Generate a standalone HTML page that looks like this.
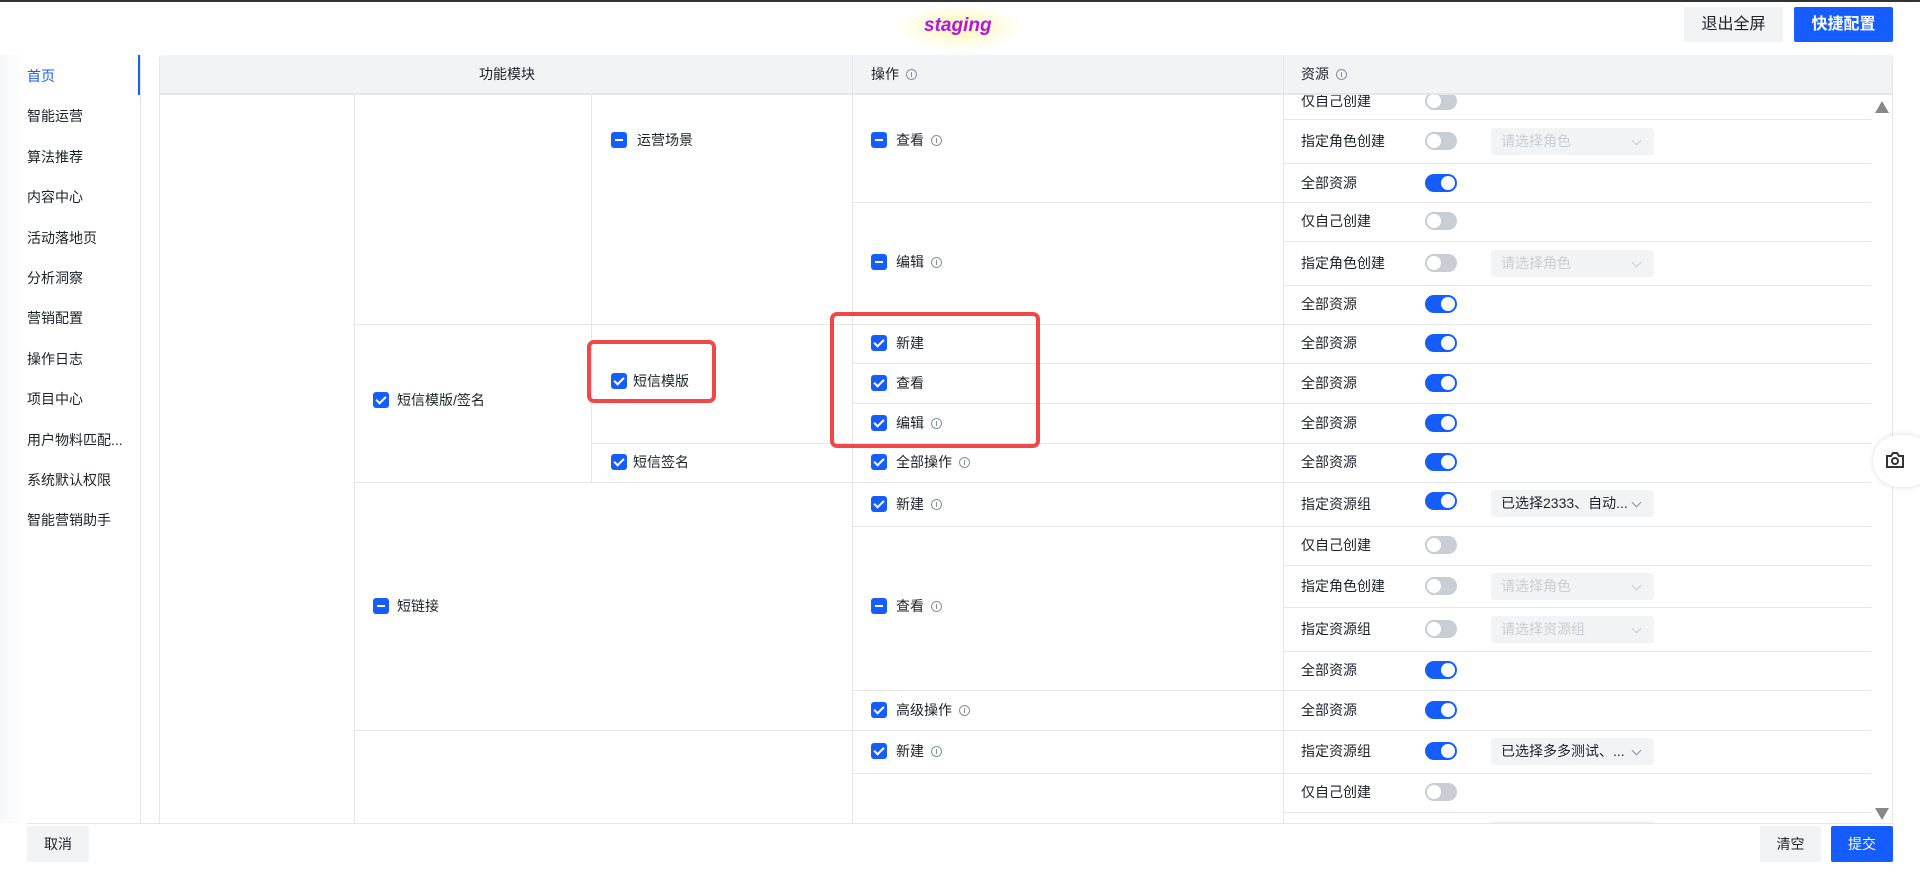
<!DOCTYPE html>
<html><head><meta charset="utf-8"><style>
*{margin:0;padding:0;box-sizing:border-box}
body{width:1920px;height:878px;overflow:hidden;background:#fff;position:relative;font-family:"Liberation Sans","Noto Sans CJK SC",sans-serif;color:#1d2129}
.a{position:absolute}
.t{position:absolute;font-size:14px;line-height:16px;white-space:nowrap;color:#1d2129}
.cb{position:absolute;width:16px;height:16px;border-radius:3px;background:#165dff}
.cb.c::after{content:"";position:absolute;left:5px;top:2px;width:4px;height:8px;border:solid #fff;border-width:0 2px 2px 0;transform:rotate(45deg)}
.cb.i::after{content:"";position:absolute;left:4px;top:7px;width:8px;height:2px;background:#fff}
.h{position:absolute;height:1px;background:#e5e6eb}
.v{position:absolute;width:1px;background:#e5e6eb}
.tg{position:absolute;width:32px;height:18px;border-radius:9px;background:#c9cdd4}
.tg::after{content:"";position:absolute;left:2px;top:2px;width:14px;height:14px;border-radius:50%;background:#fff}
.tg.on{background:#165dff}.tg.on::after{left:16px}
.sel{position:absolute;width:163px;height:27px;border-radius:3px;background:#f2f3f5;font-size:14px;line-height:27px;padding-left:10px;color:#c9cdd4;white-space:nowrap}
.sel.d{color:#1d2129}
.sel::after{content:"";position:absolute;right:14px;top:9px;width:6px;height:6px;border:solid #86909c;border-width:0 1px 1px 0;transform:rotate(45deg)}
.sel.p::after{border-color:#c9cdd4}
.in{display:inline-block;width:11px;height:11px;border:1px solid #86909c;border-radius:50%;position:relative;vertical-align:-1px;margin-left:7px}
.in::after{content:"";position:absolute;left:4px;top:2px;width:1px;height:5px;background:#86909c}
.sb{position:absolute;left:27px;font-size:14px;color:#1d2129}
.btn{position:absolute;border-radius:2px;text-align:center;font-size:16px}
</style></head><body>
<div class="a" style="left:0;top:0;width:1920px;height:2px;background:#333"></div>
<div class="a" style="left:895px;top:4px;width:130px;height:46px;border-radius:50%;background:radial-gradient(ellipse,#fbf7b0 0%,rgba(255,255,220,0) 70%)"></div>
<div class="a" style="left:924px;top:15px;font-size:19px;font-weight:bold;font-style:italic;color:#b316e0">staging</div>
<div class="btn" style="left:1684px;top:7px;width:99px;height:35px;line-height:35px;background:#f2f3f5;color:#1d2129">退出全屏</div>
<div class="btn" style="left:1794px;top:7px;width:99px;height:35px;line-height:35px;background:#165dff;color:#fff;font-weight:bold">快捷配置</div>

<!-- sidebar -->
<div class="a" style="left:0;top:55px;width:27px;height:768px;background:linear-gradient(90deg,#f7f8fa,#fff)"></div>
<div class="v" style="left:140px;top:55px;height:768px"></div>
<div class="a" style="left:138px;top:55px;width:2px;height:40px;background:#165dff"></div>
<div class="sb" style="top:66px;color:#165dff">首页</div>
<div class="sb" style="top:106px">智能运营</div>
<div class="sb" style="top:147px">算法推荐</div>
<div class="sb" style="top:187px">内容中心</div>
<div class="sb" style="top:228px">活动落地页</div>
<div class="sb" style="top:268px">分析洞察</div>
<div class="sb" style="top:308px">营销配置</div>
<div class="sb" style="top:349px">操作日志</div>
<div class="sb" style="top:389px">项目中心</div>
<div class="sb" style="top:430px">用户物料匹配...</div>
<div class="sb" style="top:470px">系统默认权限</div>
<div class="sb" style="top:510px">智能营销助手</div>

<!-- table body -->
<div class="a" style="left:159px;top:55px;width:1734px;height:768px;overflow:hidden;border-left:1px solid #e5e6eb;border-right:1px solid #e5e6eb;border-top-left-radius:4px;border-top-right-radius:4px">
<div class="a" style="left:-159px;top:-55px;width:1920px;height:878px">
<div class="v" style="left:353px;top:95px;height:728px"></div>
<div class="v" style="left:590px;top:95px;height:387px"></div>
<div class="v" style="left:851px;top:95px;height:728px"></div>
<div class="v" style="left:1282px;top:95px;height:728px"></div>
<div class="h" style="left:353px;top:324px;width:498px"></div>
<div class="h" style="left:353px;top:482px;width:498px"></div>
<div class="h" style="left:353px;top:730px;width:498px"></div>
<div class="h" style="left:590px;top:443px;width:261px"></div>
<div class="h" style="left:851px;top:202px;width:431px"></div>
<div class="h" style="left:851px;top:324px;width:431px"></div>
<div class="h" style="left:851px;top:363px;width:431px"></div>
<div class="h" style="left:851px;top:403px;width:431px"></div>
<div class="h" style="left:851px;top:443px;width:431px"></div>
<div class="h" style="left:851px;top:482px;width:431px"></div>
<div class="h" style="left:851px;top:526px;width:431px"></div>
<div class="h" style="left:851px;top:690px;width:431px"></div>
<div class="h" style="left:851px;top:730px;width:431px"></div>
<div class="h" style="left:851px;top:773px;width:431px"></div>
<div class="h" style="left:1282px;top:119px;width:588px"></div>
<div class="h" style="left:1282px;top:163px;width:588px"></div>
<div class="h" style="left:1282px;top:202px;width:588px"></div>
<div class="h" style="left:1282px;top:241px;width:588px"></div>
<div class="h" style="left:1282px;top:285px;width:588px"></div>
<div class="h" style="left:1282px;top:324px;width:588px"></div>
<div class="h" style="left:1282px;top:363px;width:588px"></div>
<div class="h" style="left:1282px;top:403px;width:588px"></div>
<div class="h" style="left:1282px;top:443px;width:588px"></div>
<div class="h" style="left:1282px;top:482px;width:588px"></div>
<div class="h" style="left:1282px;top:526px;width:588px"></div>
<div class="h" style="left:1282px;top:565px;width:588px"></div>
<div class="h" style="left:1282px;top:607px;width:588px"></div>
<div class="h" style="left:1282px;top:651px;width:588px"></div>
<div class="h" style="left:1282px;top:690px;width:588px"></div>
<div class="h" style="left:1282px;top:730px;width:588px"></div>
<div class="h" style="left:1282px;top:773px;width:588px"></div>
<div class="h" style="left:1282px;top:812px;width:588px"></div>

<!-- col2 -->
<div class="cb c" style="left:372px;top:392px"></div><div class="t" style="left:396px;top:392px">短信模版/签名</div>
<div class="cb i" style="left:372px;top:598px"></div><div class="t" style="left:396px;top:598px">短链接</div>
<!-- col3 -->
<div class="cb i" style="left:610px;top:132px"></div><div class="t" style="left:636px;top:132px">运营场景</div>
<div class="cb c" style="left:610px;top:373px"></div><div class="t" style="left:632px;top:373px">短信模版</div>
<div class="cb c" style="left:610px;top:454px"></div><div class="t" style="left:632px;top:454px">短信签名</div>
<!-- ops -->
<div class="cb i" style="left:870px;top:132px"></div><div class="t" style="left:895px;top:132px">查看<span class="in"></span></div>
<div class="cb i" style="left:870px;top:254px"></div><div class="t" style="left:895px;top:254px">编辑<span class="in"></span></div>
<div class="cb c" style="left:870px;top:335px"></div><div class="t" style="left:895px;top:335px">新建</div>
<div class="cb c" style="left:870px;top:375px"></div><div class="t" style="left:895px;top:375px">查看</div>
<div class="cb c" style="left:870px;top:415px"></div><div class="t" style="left:895px;top:415px">编辑<span class="in"></span></div>
<div class="cb c" style="left:870px;top:454px"></div><div class="t" style="left:895px;top:454px">全部操作<span class="in"></span></div>
<div class="cb c" style="left:870px;top:496px"></div><div class="t" style="left:895px;top:496px">新建<span class="in"></span></div>
<div class="cb i" style="left:870px;top:598px"></div><div class="t" style="left:895px;top:598px">查看<span class="in"></span></div>
<div class="cb c" style="left:870px;top:702px"></div><div class="t" style="left:895px;top:702px">高级操作<span class="in"></span></div>
<div class="cb c" style="left:870px;top:743px"></div><div class="t" style="left:895px;top:743px">新建<span class="in"></span></div>

<!-- resources -->
<div class="t" style="left:1300px;top:93px">仅自己创建</div><div class="tg" style="left:1424px;top:92px"></div>
<div class="t" style="left:1300px;top:133px">指定角色创建</div><div class="tg" style="left:1424px;top:132px"></div><div class="sel p" style="left:1490px;top:128px">请选择角色</div>
<div class="t" style="left:1300px;top:175px">全部资源</div><div class="tg on" style="left:1424px;top:174px"></div>
<div class="t" style="left:1300px;top:213px">仅自己创建</div><div class="tg" style="left:1424px;top:212px"></div>
<div class="t" style="left:1300px;top:255px">指定角色创建</div><div class="tg" style="left:1424px;top:254px"></div><div class="sel p" style="left:1490px;top:250px">请选择角色</div>
<div class="t" style="left:1300px;top:296px">全部资源</div><div class="tg on" style="left:1424px;top:295px"></div>
<div class="t" style="left:1300px;top:335px">全部资源</div><div class="tg on" style="left:1424px;top:334px"></div>
<div class="t" style="left:1300px;top:375px">全部资源</div><div class="tg on" style="left:1424px;top:374px"></div>
<div class="t" style="left:1300px;top:415px">全部资源</div><div class="tg on" style="left:1424px;top:414px"></div>
<div class="t" style="left:1300px;top:454px">全部资源</div><div class="tg on" style="left:1424px;top:453px"></div>
<div class="t" style="left:1300px;top:496px">指定资源组</div><div class="tg on" style="left:1424px;top:492px"></div><div class="sel d" style="left:1490px;top:490px">已选择2333、自动...</div>
<div class="t" style="left:1300px;top:537px">仅自己创建</div><div class="tg" style="left:1424px;top:536px"></div>
<div class="t" style="left:1300px;top:578px">指定角色创建</div><div class="tg" style="left:1424px;top:577px"></div><div class="sel p" style="left:1490px;top:573px">请选择角色</div>
<div class="t" style="left:1300px;top:621px">指定资源组</div><div class="tg" style="left:1424px;top:620px"></div><div class="sel p" style="left:1490px;top:616px">请选择资源组</div>
<div class="t" style="left:1300px;top:662px">全部资源</div><div class="tg on" style="left:1424px;top:661px"></div>
<div class="t" style="left:1300px;top:702px">全部资源</div><div class="tg on" style="left:1424px;top:701px"></div>
<div class="t" style="left:1300px;top:743px">指定资源组</div><div class="tg on" style="left:1424px;top:742px"></div><div class="sel d" style="left:1490px;top:738px">已选择多多测试、...</div>
<div class="t" style="left:1300px;top:784px">仅自己创建</div><div class="tg" style="left:1424px;top:783px"></div>
<div class="sel p" style="left:1490px;top:821px">请选择角色</div>

<!-- header -->
<div class="a" style="left:159px;top:55px;width:1734px;height:40px;background:#f2f3f5;border-bottom:2px solid #e5e6eb"></div>
<div class="v" style="left:851px;top:55px;height:40px"></div>
<div class="v" style="left:1282px;top:55px;height:40px"></div>
<div class="t" style="left:478px;top:66px">功能模块</div>
<div class="t" style="left:870px;top:66px">操作<span class="in"></span></div>
<div class="t" style="left:1300px;top:66px">资源<span class="in"></span></div>
<!-- scrollbar -->
<div class="a" style="left:1874px;top:101px;width:0;height:0;border-left:7px solid transparent;border-right:7px solid transparent;border-bottom:12px solid #888"></div>
<div class="a" style="left:1874px;top:808px;width:0;height:0;border-left:7px solid transparent;border-right:7px solid transparent;border-top:12px solid #888"></div>
</div></div>

<!-- red boxes -->
<div class="a" style="left:587px;top:340px;width:129px;height:63px;border:4px solid #f04848;border-radius:7px"></div>
<div class="a" style="left:830px;top:312px;width:210px;height:136px;border:4px solid #f04848;border-radius:7px"></div>

<!-- camera -->
<div class="a" style="left:1873px;top:435px;width:60px;height:52px;border-radius:26px;background:#fff;box-shadow:0 0 6px rgba(0,0,0,.15)"></div>
<svg class="a" style="left:1885px;top:450px" width="20" height="20" viewBox="0 0 20 20"><path d="M2 6h4l2-3h4l2 3h4v11H2z" fill="none" stroke="#333" stroke-width="2"/><circle cx="10" cy="11" r="3" fill="none" stroke="#333" stroke-width="2"/></svg>

<!-- footer -->
<div class="h" style="left:27px;top:823px;width:1866px"></div>
<div class="btn" style="left:27px;top:826px;width:62px;height:36px;line-height:36px;background:#f2f3f5;font-size:14px">取消</div>
<div class="btn" style="left:1760px;top:826px;width:61px;height:36px;line-height:36px;background:#f2f3f5;font-size:14px">清空</div>
<div class="btn" style="left:1831px;top:826px;width:62px;height:36px;line-height:36px;background:#165dff;color:#fff;font-size:14px">提交</div>
</body></html>
